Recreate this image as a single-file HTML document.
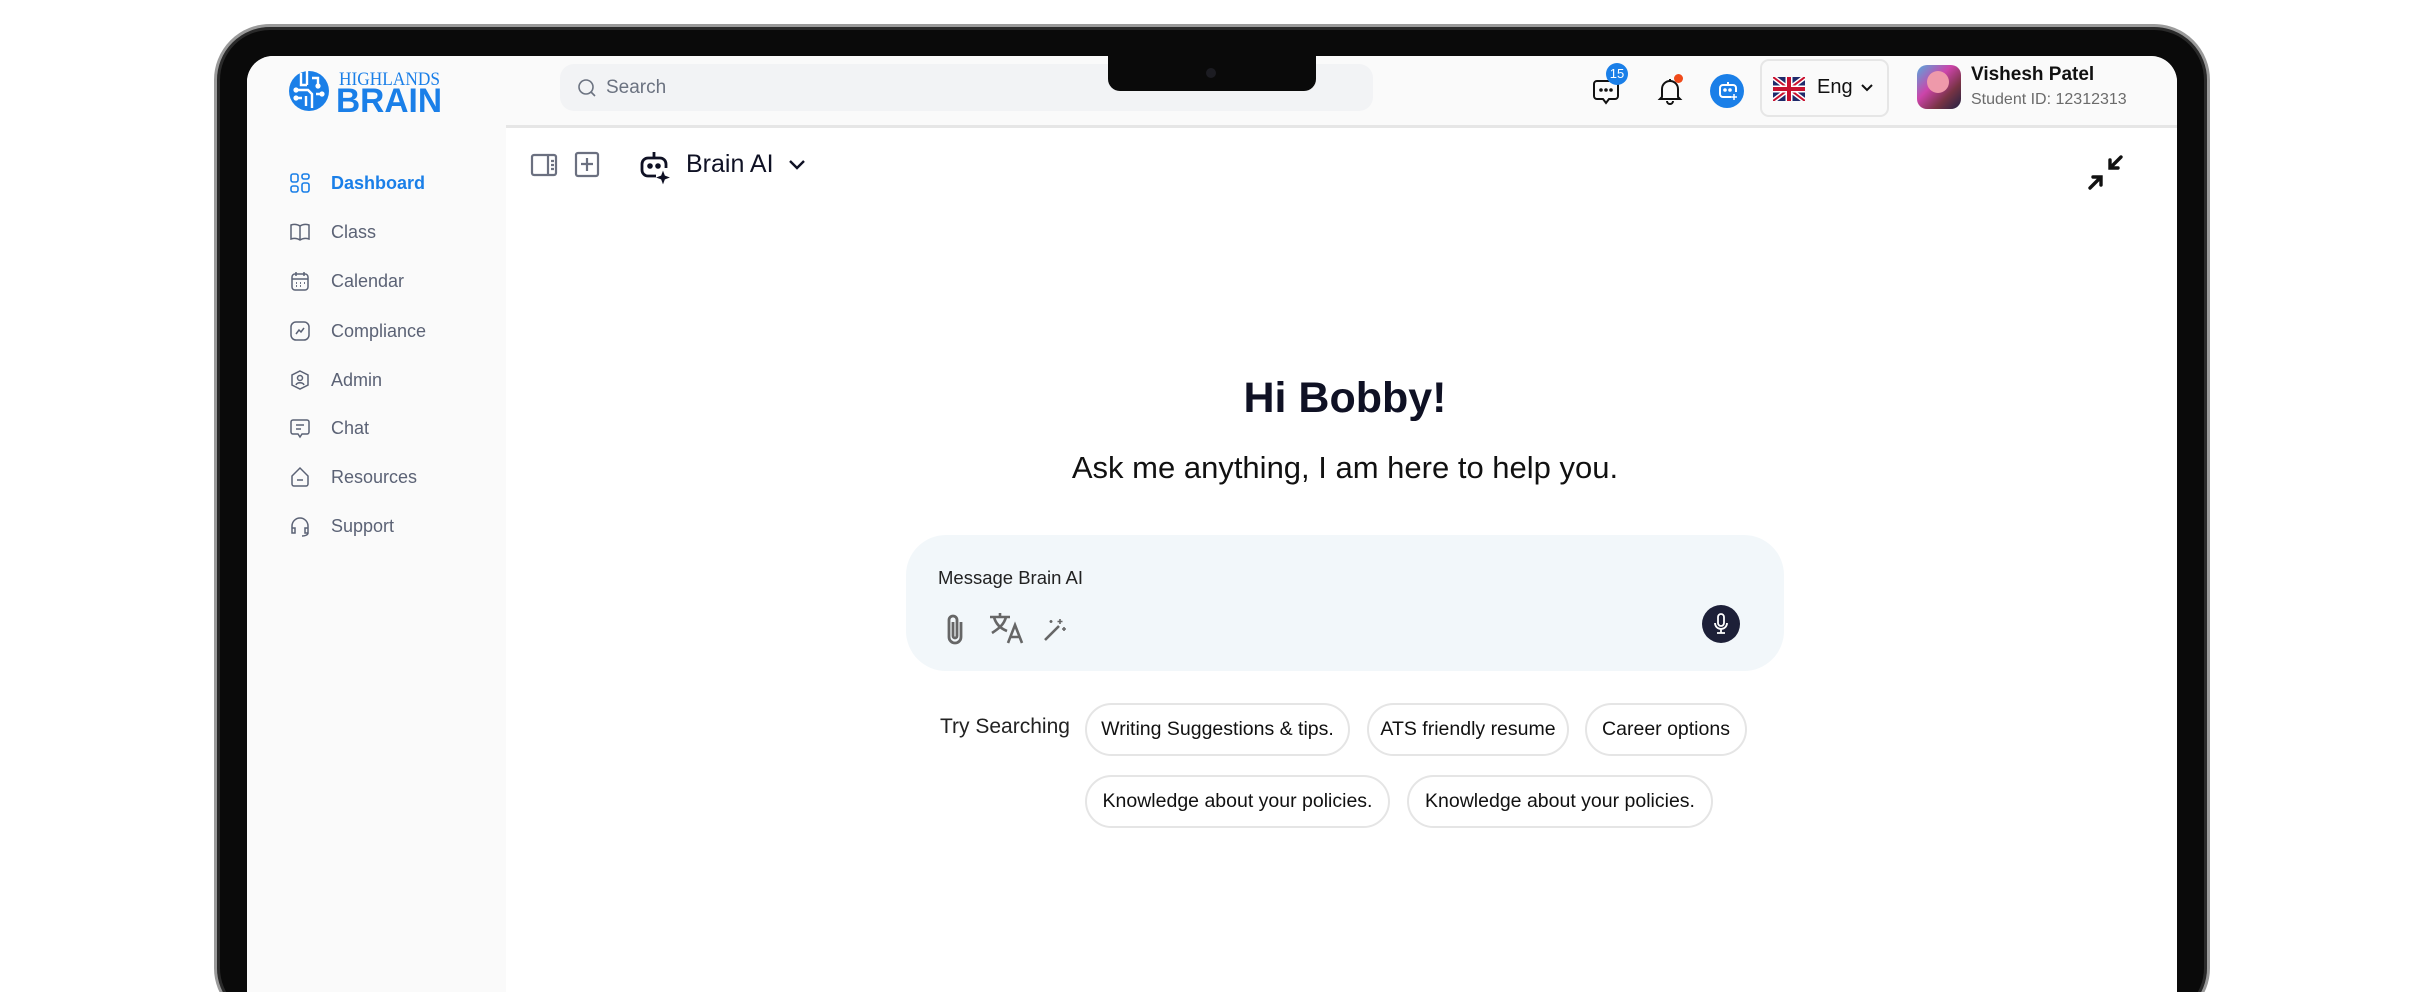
<!DOCTYPE html>
<html><head><meta charset="utf-8"><style>
*{box-sizing:border-box;margin:0;padding:0}
html,body{width:2424px;height:992px;overflow:hidden}
body{background:#fff;position:relative;font-family:"Liberation Sans",sans-serif;color:#111}
.abs{position:absolute}
.bezel{left:214px;top:24px;width:1996px;height:1000px;border-radius:56px;background:#0a0a0a;border:3px solid #9a9a9a;box-shadow:inset 0 0 0 3px #2a2a2a}
.screen{left:247px;top:56px;width:1930px;height:936px;border-radius:26px 26px 0 0;background:#fff;overflow:hidden}
.side{left:0;top:0;width:259px;height:936px;background:#fafafa}
.hdr{left:259px;top:0;width:1671px;height:72px;background:#fafafa;border-bottom:3px solid #e6e6e6}
.notch{left:861px;top:-2px;width:208px;height:37px;background:#0a0a0a;border-radius:0 0 12px 12px;z-index:5}
.nav{position:absolute;left:42px;font-size:18px;color:#5b6275;display:flex;align-items:center}
.nav svg{width:22px;height:22px;margin-right:20px}
.chip{position:absolute;height:53px;border:2px solid #e5e5e5;border-radius:27px;font-size:19.5px;color:#111;display:flex;align-items:center;justify-content:center;background:#fff}
</style></head><body>
<div class="abs bezel"></div>
<div class="abs screen">
  <div class="abs side"></div>
  <div class="abs hdr"></div>
  <div class="abs notch"><div class="abs" style="left:98px;top:14px;width:10px;height:10px;border-radius:50%;background:#1c1c22"></div></div>
  <!-- logo -->
  <svg class="abs" style="left:41px;top:12px" width="160" height="46" viewBox="0 0 160 46">
    <circle cx="21" cy="23" r="20" fill="#1a7fe8"/>
    <g stroke="#fff" stroke-width="2.4" fill="none">
      <path d="M13 5v12h6M19 3v14M8 22h12l4 4v14M24 10h6v8M14 30h-6M18 28v10M28 26h6"/>
    </g>
    <g fill="#fff"><circle cx="30" cy="18" r="2.6"/><circle cx="8" cy="22" r="2.6"/><circle cx="8" cy="30" r="2.6"/><circle cx="34" cy="26" r="2.6"/></g>
    <text x="51" y="17" font-family="Liberation Serif,serif" font-size="19" fill="#1a7fe8" textLength="101" lengthAdjust="spacingAndGlyphs">HIGHLANDS</text>
    <text x="48" y="44" font-family="Liberation Sans,sans-serif" font-weight="bold" font-size="34" fill="#1a7fe8" textLength="106" lengthAdjust="spacingAndGlyphs">BRAIN</text>
  </svg>
  <!-- nav -->
  <div class="nav" style="top:116px;color:#1a7fe8;font-weight:bold"><svg viewBox="0 0 22 22" fill="none" stroke="#1a7fe8" stroke-width="1.6"><rect x="2" y="2" width="7" height="8" rx="2"/><rect x="13" y="2" width="7" height="5" rx="2"/><rect x="2" y="14" width="7" height="6" rx="2"/><rect x="13" y="11" width="7" height="9" rx="2"/></svg>Dashboard</div>
  <div class="nav" style="top:165px"><svg viewBox="0 0 22 22" fill="none" stroke="#5b6275" stroke-width="1.5"><path d="M11 5c-3-2-6-2-9-1v14c3-1 6-1 9 1 3-2 6-2 9-1V4c-3-1-6-1-9 1zM11 5v14"/></svg>Class</div>
  <div class="nav" style="top:214px"><svg viewBox="0 0 22 22" fill="none" stroke="#5b6275" stroke-width="1.5"><rect x="3" y="4" width="16" height="16" rx="3"/><path d="M7 2v4M15 2v4M3 9h16"/><path d="M7 13h1M11 13h1M15 13h1M7 16h1M11 16h1" stroke-width="1.8"/></svg>Calendar</div>
  <div class="nav" style="top:264px"><svg viewBox="0 0 22 22" fill="none" stroke="#5b6275" stroke-width="1.5"><rect x="2" y="2" width="18" height="18" rx="5"/><path d="M7 14l3-4 2 2 3-4"/></svg>Compliance</div>
  <div class="nav" style="top:313px"><svg viewBox="0 0 22 22" fill="none" stroke="#5b6275" stroke-width="1.5"><path d="M11 2l8 4v10l-8 4-8-4V6z"/><circle cx="11" cy="9" r="2.5"/><path d="M7 16c1-3 7-3 8 0"/></svg>Admin</div>
  <div class="nav" style="top:361px"><svg viewBox="0 0 22 22" fill="none" stroke="#5b6275" stroke-width="1.5"><path d="M4 3h14a2 2 0 012 2v10a2 2 0 01-2 2h-5l-2 3-2-3H4a2 2 0 01-2-2V5a2 2 0 012-2zM7 8h8M7 12h5"/></svg>Chat</div>
  <div class="nav" style="top:410px"><svg viewBox="0 0 22 22" fill="none" stroke="#5b6275" stroke-width="1.5"><path d="M3 10l8-8 8 8v8a2 2 0 01-2 2H5a2 2 0 01-2-2z"/><path d="M8 14h6"/></svg>Resources</div>
  <div class="nav" style="top:459px"><svg viewBox="0 0 22 22" fill="none" stroke="#5b6275" stroke-width="1.5"><path d="M3 13v-2a8 8 0 0116 0v2M3 13h3v5H3zM16 13h3v5h-3zM19 18c0 2-3 3-6 3"/></svg>Support</div>
  <!-- search -->
  <div class="abs" style="left:313px;top:8px;width:813px;height:47px;background:#f2f3f5;border-radius:14px"></div>
  <svg class="abs" style="left:329px;top:21px" width="22" height="22" viewBox="0 0 22 22" fill="none" stroke="#6b7280" stroke-width="1.6"><circle cx="10" cy="10" r="7"/><path d="M15 15l4 4"/></svg>
  <div class="abs" style="left:359px;top:21px;font-size:19px;color:#6b7280">Search</div>
  <!-- header right -->
  <svg class="abs" style="left:1344px;top:20px" width="30" height="30" viewBox="0 0 30 30" fill="none" stroke="#111" stroke-width="2"><path d="M6 5h18a3 3 0 013 3v12a3 3 0 01-3 3h-6l-3 4-3-4H6a3 3 0 01-3-3V8a3 3 0 013-3z"/><circle cx="10" cy="14" r=".8" fill="#111"/><circle cx="15" cy="14" r=".8" fill="#111"/><circle cx="20" cy="14" r=".8" fill="#111"/></svg>
  <div class="abs" style="left:1359px;top:7px;width:22px;height:22px;border-radius:50%;background:#1a7fe8;color:#fff;font-size:13px;text-align:center;line-height:22px">15</div>
  <svg class="abs" style="left:1410px;top:20px" width="26" height="30" viewBox="0 0 26 30" fill="none" stroke="#111" stroke-width="2"><path d="M5 21V13a8 8 0 0116 0v8l2 2H3zM10 25a3 3 0 006 0M13 3v2"/></svg>
  <div class="abs" style="left:1427px;top:18px;width:9px;height:9px;border-radius:50%;background:#f04a1a"></div>
  <div class="abs" style="left:1463px;top:18px;width:34px;height:34px;border-radius:50%;background:#1a7fe8"></div>
  <svg class="abs" style="left:1470px;top:24px" width="22" height="22" viewBox="0 0 22 22" fill="none" stroke="#fff" stroke-width="2"><path d="M14 17H6a3 3 0 01-3-3V8a3 3 0 013-3h10a3 3 0 013 3v4M11 2v3"/><circle cx="8" cy="10" r=".8" fill="#fff"/><circle cx="13" cy="10" r=".8" fill="#fff"/><path d="M17 14v6M14 17h6" stroke-width="1.5"/></svg>
  <div class="abs" style="left:1513px;top:3px;width:129px;height:58px;border:2px solid #e6e6e6;border-radius:9px;background:#fafafa"></div>
  <svg class="abs" style="left:1526px;top:21px" width="32" height="24" viewBox="0 0 32 24"><rect width="32" height="24" rx="4" fill="#1f2a6b"/><path d="M0 0L32 24M32 0L0 24" stroke="#fff" stroke-width="5"/><path d="M0 0L32 24M32 0L0 24" stroke="#c8102e" stroke-width="2"/><path d="M16 0v24M0 12h32" stroke="#fff" stroke-width="7"/><path d="M16 0v24M0 12h32" stroke="#c8102e" stroke-width="4"/></svg>
  <div class="abs" style="left:1570px;top:20px;font-size:20px;color:#111">Eng</div>
  <svg class="abs" style="left:1613px;top:27px" width="14" height="10" viewBox="0 0 14 10" fill="none" stroke="#111" stroke-width="2"><path d="M2 2l5 5 5-5"/></svg>
  <div class="abs" style="left:1670px;top:9px;width:44px;height:44px;border-radius:10px;background:linear-gradient(135deg,#5ad 0%,#c4a 40%,#734 70%,#224 100%)"></div>
  <div class="abs" style="left:1680px;top:15px;width:22px;height:22px;border-radius:50%;background:#e9a"></div>
  <div class="abs" style="left:1724px;top:8px;font-size:19px;font-weight:bold;color:#111">Vishesh Patel</div>
  <div class="abs" style="left:1724px;top:35px;font-size:16px;color:#6b6b6b">Student ID: 12312313</div>
  <!-- toolbar -->
  <svg class="abs" style="left:283px;top:97px" width="28" height="24" viewBox="0 0 28 24" fill="none" stroke="#6b7080" stroke-width="2.2"><rect x="2" y="2" width="24" height="20" rx="2"/><path d="M18 2v20M21 8h3M21 12h3M21 16h3"/></svg>
  <svg class="abs" style="left:327px;top:95px" width="26" height="27" viewBox="0 0 26 27" fill="none" stroke="#6b7080" stroke-width="2.2"><rect x="2" y="2" width="22" height="23" rx="2"/><path d="M13 7v13M7 13h12"/></svg>
  <svg class="abs" style="left:389px;top:92px" width="38" height="38" viewBox="0 0 38 38" fill="none" stroke="#0f1124" stroke-width="2.8"><path d="M20 28h-8a6 6 0 01-6-6v-6a6 6 0 016-6h12a6 6 0 016 6v4M18 4v6"/><circle cx="14" cy="18" r="1.4" fill="#0f1124"/><circle cx="22" cy="18" r="1.4" fill="#0f1124"/><path d="M27 24l1.5 4 4 1.5-4 1.5-1.5 4-1.5-4-4-1.5 4-1.5z" fill="#0f1124" stroke-width="1"/></svg>
  <div class="abs" style="left:439px;top:94px;font-size:25px;color:#0f1124">Brain AI</div>
  <svg class="abs" style="left:541px;top:103px" width="18" height="12" viewBox="0 0 18 12" fill="none" stroke="#0f1124" stroke-width="2.4"><path d="M2 2l7 7 7-7"/></svg>
  <svg class="abs" style="left:1840px;top:98px" width="38" height="38" viewBox="0 0 38 38" fill="none" stroke="#111" stroke-width="3.4" stroke-linecap="round"><path d="M34 3L23 14M23 6v8h8M3 34l11-11M14 31v-8H6"/></svg>
  <!-- center -->
  <div class="abs" style="left:0;width:2196px;top:318px;text-align:center;font-size:43px;font-weight:bold;color:#0f1124">Hi Bobby!</div>
  <div class="abs" style="left:0;width:2196px;top:394px;text-align:center;font-size:31px;color:#111">Ask me anything, I am here to help you.</div>
  <div class="abs" style="left:659px;top:479px;width:878px;height:136px;background:#f2f7fa;border-radius:40px"></div>
  <div class="abs" style="left:691px;top:511px;font-size:18.5px;color:#222">Message Brain AI</div>
  <svg class="abs" style="left:697px;top:556px" width="22" height="34" viewBox="0 0 22 34" fill="none" stroke="#666" stroke-width="2.8"><path d="M17 10v15a6 6 0 01-12 0V8a4 4 0 018 0v16a2 2 0 01-4 0V10"/></svg>
  <svg class="abs" style="left:741px;top:554px" width="38" height="36" viewBox="0 0 38 36" fill="none" stroke="#666" stroke-width="2.6"><path d="M2 7h20M12 3v4M6 7c2 8 8 12 13 14M18 7c-2 8-8 12-14 16M20 33l7-18 7 18M23 27h8"/></svg>
  <svg class="abs" style="left:795px;top:561px" width="26" height="26" viewBox="0 0 26 26" fill="none" stroke="#666" stroke-width="2.6"><path d="M3 23L17 9"/><path d="M18 2v5M15.5 4.5h5M22 10v4M20 12h4M9 3v3M7.5 4.5h3" stroke-width="1.6"/></svg>
  <div class="abs" style="left:1455px;top:549px;width:38px;height:38px;border-radius:50%;background:#1d2038"></div>
  <svg class="abs" style="left:1464px;top:556px" width="20" height="24" viewBox="0 0 20 24" fill="none" stroke="#fff" stroke-width="1.8"><rect x="7" y="2" width="6" height="12" rx="3"/><path d="M4 11a6 6 0 0012 0M10 17v4M6 21h8"/></svg>
  <div class="abs" style="left:693px;top:659px;font-size:21px;color:#222">Try Searching</div>
  <div class="chip" style="left:838px;top:647px;width:265px">Writing Suggestions &amp; tips.</div>
  <div class="chip" style="left:1120px;top:647px;width:202px">ATS friendly resume</div>
  <div class="chip" style="left:1338px;top:647px;width:162px">Career options</div>
  <div class="chip" style="left:838px;top:719px;width:305px">Knowledge about your policies.</div>
  <div class="chip" style="left:1160px;top:719px;width:306px">Knowledge about your policies.</div>
</div>
</body></html>
